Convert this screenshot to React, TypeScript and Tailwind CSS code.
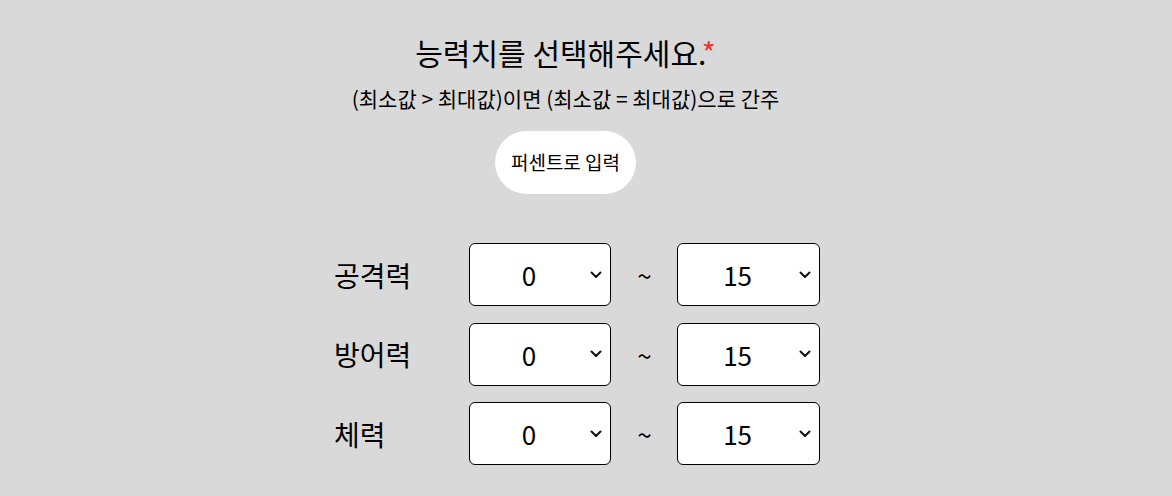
import { useState } from 'react';

const OPTIONS = Array.from({ length: 16 }, (_, i) => i);

interface StatRow {
  key: string;
  label: string;
}

const STATS: StatRow[] = [
  { key: 'atk', label: '공격력' },
  { key: 'def', label: '방어력' },
  { key: 'hp', label: '체력' },
];

function Chevron() {
  return (
    <svg
      className="pointer-events-none absolute right-[9px] top-1/2 -translate-y-1/2"
      width="12"
      height="8"
      viewBox="0 0 12 8"
      fill="none"
    >
      <path d="M1.5 1.5 6 6l4.5-4.5" stroke="#111" strokeWidth="2" strokeLinecap="round" strokeLinejoin="round" />
    </svg>
  );
}

function RangeSelect({ value, onChange }: { value: number; onChange: (v: number) => void }) {
  return (
    <div className="relative h-[63px] w-[143px]">
      <select
        value={value}
        onChange={(e) => onChange(Number(e.target.value))}
        className="h-full w-full appearance-none rounded-[6px] border border-black bg-white pr-[22px] text-center text-[26px] text-black outline-none"
      >
        {OPTIONS.map((n) => (
          <option key={n} value={n}>
            {n}
          </option>
        ))}
      </select>
      <Chevron />
    </div>
  );
}

export default function App() {
  const [ranges, setRanges] = useState<Record<string, [number, number]>>({
    atk: [0, 15],
    def: [0, 15],
    hp: [0, 15],
  });

  const update = (key: string, idx: 0 | 1, v: number) => {
    setRanges((prev) => {
      const next: [number, number] = [...prev[key]] as [number, number];
      next[idx] = v;
      return { ...prev, [key]: next };
    });
  };

  return (
    <main
      className="min-h-screen bg-[#d9d9d9] text-black"
      style={{ fontFamily: '"Noto Sans CJK KR", "Noto Sans", sans-serif' }}
    >
      <div className="flex flex-col items-center pr-[41px] pt-[31px]">
        <h1 className="text-[30px] leading-[42px]">
          능력치를 선택해주세요.<span className="text-[#e53935]">*</span>
        </h1>
        <p className="mt-[10px] text-[21px] leading-[30px]">(최소값 &gt; 최대값)이면 (최소값 = 최대값)으로 간주</p>
        <button className="mt-[18px] h-[63px] w-[141px] rounded-full bg-white text-[19px]">퍼센트로 입력</button>
      </div>

      <div className="mx-auto mt-[49px] flex w-[504px] flex-col gap-[16.5px] pr-[18px]">
        {STATS.map((s) => (
          <div key={s.key} className="flex items-center">
            <span className="w-[135px] text-[28px] leading-[40px]">{s.label}</span>
            <RangeSelect value={ranges[s.key][0]} onChange={(v) => update(s.key, 0, v)} />
            <span className="w-[66px] text-center text-[26px]">~</span>
            <RangeSelect value={ranges[s.key][1]} onChange={(v) => update(s.key, 1, v)} />
          </div>
        ))}
      </div>
    </main>
  );
}
